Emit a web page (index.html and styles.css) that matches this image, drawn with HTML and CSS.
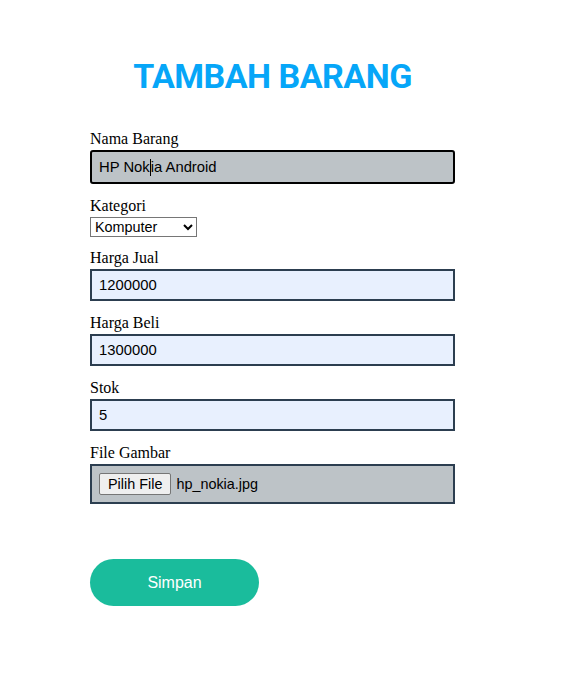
FILE: index.html
```html
<!DOCTYPE html>
<html lang="id">
<head>
<meta charset="utf-8">
<title>Tambah Barang</title>
<link rel="stylesheet" href="styles.css">
</head>
<body>
<div class="page">
  <h1 class="title">TAMBAH BARANG</h1>
  <form class="form">
    <div class="group">
      <label class="label">Nama Barang</label>
      <div class="field field-focus"><span>HP Nok</span><span class="caret"></span><span>ia Android</span></div>
    </div>
    <div class="group group-select">
      <label class="label">Kategori</label>
      <select class="select">
        <option>Komputer</option>
        <option>Handphone</option>
      </select>
    </div>
    <div class="group">
      <label class="label">Harga Jual</label>
      <input class="field field-fill" type="text" value="1200000">
    </div>
    <div class="group">
      <label class="label">Harga Beli</label>
      <input class="field field-fill" type="text" value="1300000">
    </div>
    <div class="group">
      <label class="label">Stok</label>
      <input class="field field-fill" type="text" value="5">
    </div>
    <div class="group">
      <label class="label">File Gambar</label>
      <div class="file-box">
        <button type="button" class="file-btn">Pilih File</button>
        <span class="file-name">hp_nokia.jpg</span>
      </div>
    </div>
    <button type="button" class="submit">Simpan</button>
  </form>
</div>
</body>
</html>
```

FILE: styles.css
```css
html, body {
  margin: 0;
  padding: 0;
  background: #ffffff;
}
body {
  font-family: "Liberation Serif", "Times New Roman", serif;
  font-size: 16px;
  color: #000;
}
.page {
  padding: 54px 0 0 90px;
  width: 365px;
}
.title {
  margin: 0;
  text-align: center;
  font-family: Roboto, "Liberation Sans", sans-serif;
  font-weight: 700;
  font-size: 34px;
  line-height: 44px;
  letter-spacing: -0.5px;
  color: #06a6f8;
}
.form {
  margin-top: 34px;
  display: flex;
  flex-direction: column;
}
.group {
  display: flex;
  flex-direction: column;
  margin-bottom: 15px;
}
.group-select {
  margin-bottom: 14px;
}
.label {
  display: block;
  line-height: 14px;
  height: 18px;
}
.field {
  box-sizing: border-box;
  width: 365px;
  height: 32px;
  margin: 0;
  padding: 0 7px;
  font-family: "Liberation Sans", Arial, sans-serif;
  font-size: 14.8px;
  color: #000;
  border: 2px solid #2c3e50;
  border-radius: 0;
  outline: none;
}
.field-focus {
  height: 34px;
  display: flex;
  align-items: center;
  background: #bdc3c7;
  border-color: #000;
  border-radius: 3px;
  white-space: pre;
}
.caret {
  display: inline-block;
  width: 1px;
  height: 17px;
  background: #000;
}
.field-fill {
  background: #e8f0fe;
}
.select {
  box-sizing: border-box;
  align-self: flex-start;
  margin: 0;
  width: 107px;
  height: 20px;
  font-family: "Liberation Sans", Arial, sans-serif;
  font-size: 14.4px;
  border: 1px solid #767676;
  border-radius: 0;
  background: #fff;
  color: #000;
}
.file-box {
  box-sizing: border-box;
  width: 365px;
  height: 40px;
  display: flex;
  align-items: center;
  padding: 0 7px;
  background: #bdc3c7;
  border: 2px solid #2c3e50;
  font-family: "Liberation Sans", Arial, sans-serif;
  font-size: 14.4px;
}
.file-btn {
  margin: 0;
  padding: 1px 8px;
  height: 22px;
  font-family: "Liberation Sans", Arial, sans-serif;
  font-size: 14.4px;
  color: #000;
  background: #efefef;
  border: 1px solid #767676;
  border-radius: 2px;
}
.file-name {
  margin-left: 5px;
  color: #000;
}
.submit {
  margin-top: 40px;
  width: 169px;
  height: 47px;
  border: none;
  border-radius: 24px;
  background: #1abc9c;
  color: #fff;
  font-family: "Liberation Sans", Arial, sans-serif;
  font-size: 16px;
  cursor: pointer;
}
```
